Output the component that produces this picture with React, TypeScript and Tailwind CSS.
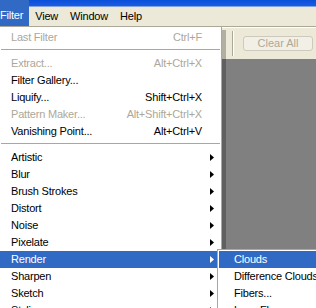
import React from "react";

type Item =
  | { kind: "sep" }
  | { kind: "item"; label: string; keys?: string; disabled?: boolean; sub?: boolean; active?: boolean };

const items: Item[] = [
  { kind: "item", label: "Last Filter", keys: "Ctrl+F", disabled: true },
  { kind: "sep" },
  { kind: "item", label: "Extract...", keys: "Alt+Ctrl+X", disabled: true },
  { kind: "item", label: "Filter Gallery..." },
  { kind: "item", label: "Liquify...", keys: "Shift+Ctrl+X" },
  { kind: "item", label: "Pattern Maker...", keys: "Alt+Shift+Ctrl+X", disabled: true },
  { kind: "item", label: "Vanishing Point...", keys: "Alt+Ctrl+V" },
  { kind: "sep" },
  { kind: "item", label: "Artistic", sub: true },
  { kind: "item", label: "Blur", sub: true },
  { kind: "item", label: "Brush Strokes", sub: true },
  { kind: "item", label: "Distort", sub: true },
  { kind: "item", label: "Noise", sub: true },
  { kind: "item", label: "Pixelate", sub: true },
  { kind: "item", label: "Render", sub: true, active: true },
  { kind: "item", label: "Sharpen", sub: true },
  { kind: "item", label: "Sketch", sub: true },
  { kind: "item", label: "Stylize", sub: true },
];

const subItems = ["Clouds", "Difference Clouds", "Fibers...", "Lens Flare...", "Lighting Effects..."];

function Arrow({ white }: { white?: boolean }) {
  return (
    <svg width="4" height="7" viewBox="0 0 4 7" className="shrink-0">
      <path d="M0 0 L4 3.5 L0 7 Z" fill={white ? "#ffffff" : "#000000"} />
    </svg>
  );
}

function MenuRow({ item }: { item: Item }) {
  if (item.kind === "sep") {
    return (
      <div className="h-[9px] pt-[3px]">
        <div className="h-px bg-[#aca899] mx-px" />
      </div>
    );
  }
  const color = item.active ? "text-white" : item.disabled ? "text-[#aca899]" : "text-black";
  return (
    <div
      className={`h-[17px] flex items-center pl-[11px] pr-[7px] ${item.active ? "bg-[#316ac5]" : ""} ${color}`}
    >
      <span className="flex-1 whitespace-nowrap">{item.label}</span>
      {item.keys && <span className="whitespace-nowrap mr-[12px]">{item.keys}</span>}
      {item.sub && <Arrow white={item.active} />}
    </div>
  );
}

export default function App() {
  return (
    <div
      className="relative w-[316px] h-[308px] overflow-hidden bg-[#ece9d8] text-[11px] leading-none tracking-[-0.2px]"
      style={{ fontFamily: '"Liberation Sans", Arial, sans-serif' }}
    >
      {/* title bar strip + menu bar */}
      <div className="h-[26px] flex bg-[linear-gradient(to_bottom,#0a4fd8_0px,#1c5be4_6px,#ece9d8_7px,#ece9d8_100%)]">
        <div className="-ml-[6px] px-[6px] bg-[#316ac5] text-white flex items-center pt-[5px]">Filter</div>
        <div className="px-[6px] flex items-center pt-[7px]">View</div>
        <div className="px-[6px] flex items-center pt-[7px]">Window</div>
        <div className="px-[6px] flex items-center pt-[7px]">Help</div>
      </div>

      <div className="flex h-[282px]">
        {/* dropdown */}
        <div className="w-[222px] shrink-0 bg-white border-t border-r border-[#aca899] pt-[2px]">
          {items.map((it, i) => (
            <MenuRow key={i} item={it} />
          ))}
        </div>

        {/* workspace */}
        <div className="flex-1 flex flex-col">
          <div className="h-[33px] border-t border-[#aca899] shadow-[inset_0_1px_0_#ffffff] flex items-center">
            <div className="ml-[10px] w-[2px] h-[25px] border-l border-[#aca899] border-r border-r-white" />
            <div className="ml-[9px] w-[70px] h-[15px] rounded-[3px] border border-[#cdcabb] bg-[#f2f0e6] text-[#aca899] tracking-normal flex items-center justify-center">
              Clear All
            </div>
          </div>
          <div className="flex-1 bg-[#808080]" />
        </div>
      </div>

      {/* menu drop shadow */}
      <div className="absolute left-[222px] top-[30px] w-[4px] h-[278px] bg-black/25" />

      {/* Render submenu */}
      <div className="absolute left-[217px] top-[249px] w-[130px] bg-white border border-[#aca899] pt-px pl-px">
        {subItems.map((s, i) => (
          <div
            key={s}
            className={`h-[17px] flex items-center pl-[15px] whitespace-nowrap ${i === 0 ? "bg-[#316ac5] text-white" : "text-black"}`}
          >
            {s}
          </div>
        ))}
      </div>
    </div>
  );
}
